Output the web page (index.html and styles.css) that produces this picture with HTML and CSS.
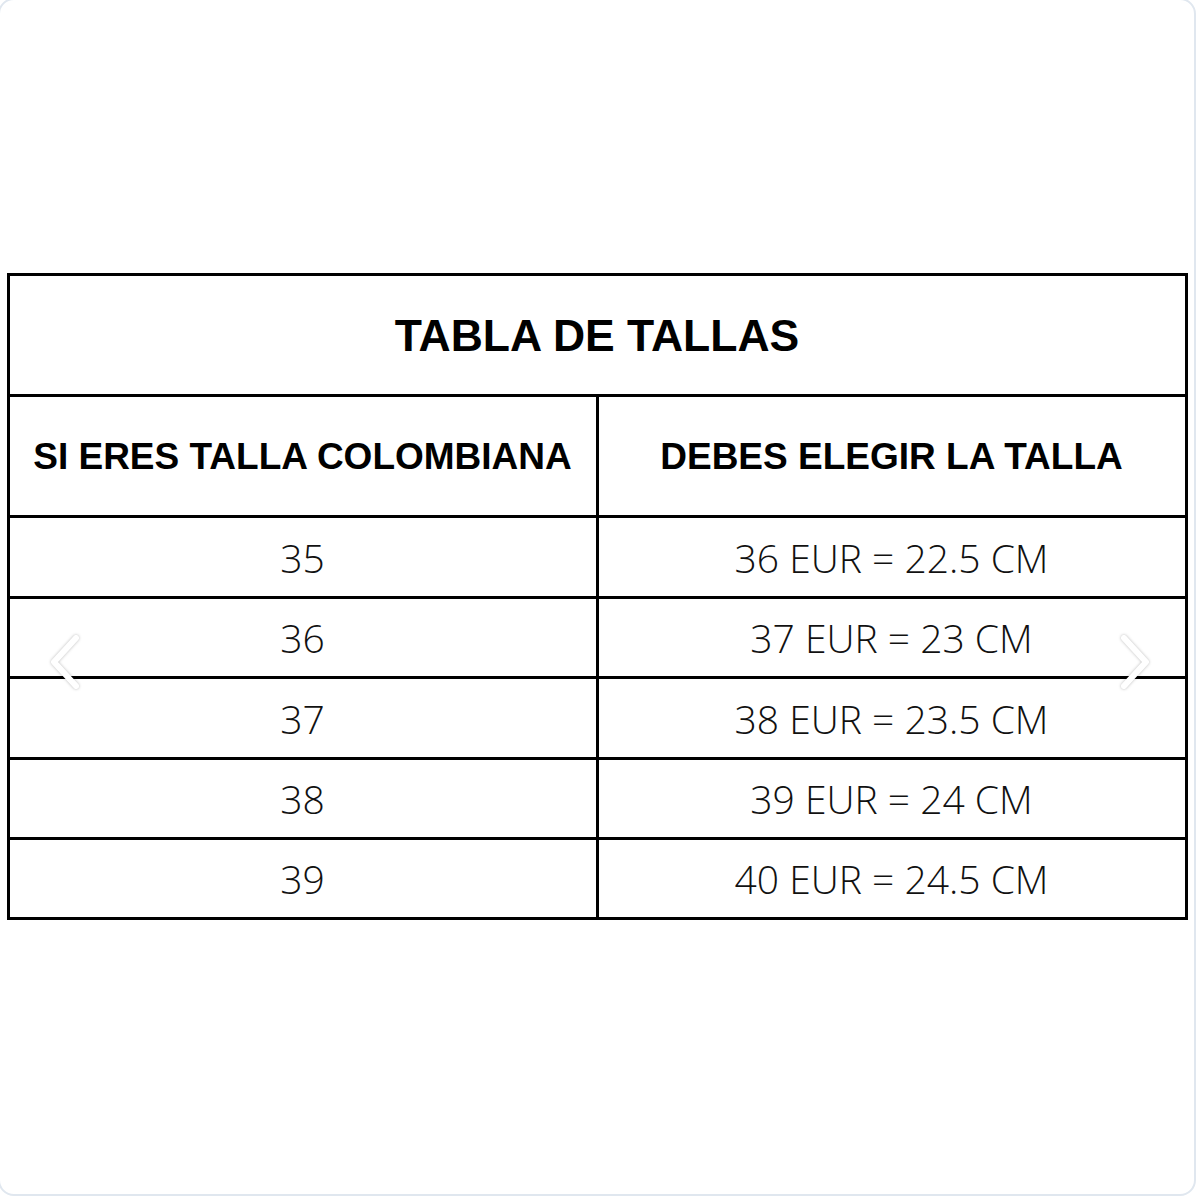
FILE: index.html
```html
<!DOCTYPE html>
<html lang="es">
<head>
<meta charset="utf-8">
<title>Tabla de tallas</title>
<link rel="stylesheet" href="styles.css">
</head>
<body>
<div class="card">
  <div class="chart">
    <div class="cell title">TABLA DE TALLAS</div>
    <div class="cell head">SI ERES TALLA COLOMBIANA</div>
    <div class="cell head">DEBES ELEGIR LA TALLA</div>
    <div class="cell data r1">35</div>
    <div class="cell data r1">36 EUR = 22.5 CM</div>
    <div class="cell data r2">36</div>
    <div class="cell data r2">37 EUR = 23 CM</div>
    <div class="cell data r3">37</div>
    <div class="cell data r3">38 EUR = 23.5 CM</div>
    <div class="cell data r4">38</div>
    <div class="cell data r4">39 EUR = 24 CM</div>
    <div class="cell data r5">39</div>
    <div class="cell data r5">40 EUR = 24.5 CM</div>
  </div>
  <button class="nav prev" aria-label="Anterior">
    <svg viewBox="0 0 40 64" width="40" height="64"><polyline points="30,8 8,32 30,56" /></svg>
  </button>
  <button class="nav next" aria-label="Siguiente">
    <svg viewBox="0 0 40 64" width="40" height="64"><polyline points="10,8 32,32 10,56" /></svg>
  </button>
</div>
</body>
</html>
```
FILE: styles.css
```css
html, body {
  margin: 0;
  padding: 0;
  background: #ffffff;
  overflow: hidden;
}
.card {
  position: relative;
  box-sizing: border-box;
  width: 1198px;
  height: 1198px;
  margin: -2px 0 0 -2px;
  border: 2px solid #e0e7ef;
  border-radius: 16px;
  background: #ffffff;
  display: flex;
  align-items: center;
  justify-content: center;
}
.chart {
  display: grid;
  grid-template-columns: 589px 589px;
  grid-template-rows: 121px 121px 81px 80px 81px 80px 80px;
  border-top: 3px solid #000;
  border-left: 3px solid #000;
  margin-top: -2px;
}
.cell {
  box-sizing: border-box;
  border-right: 3px solid #000;
  border-bottom: 3px solid #000;
  display: flex;
  align-items: center;
  justify-content: center;
  color: #000;
  white-space: nowrap;
}
.title {
  grid-column: 1 / 3;
  font-family: "Liberation Sans", Arial, sans-serif;
  font-weight: 700;
  font-size: 44.5px;
  padding-top: 2px;
}
.head {
  font-family: "Liberation Sans", Arial, sans-serif;
  font-weight: 700;
  font-size: 37px;
  padding-top: 2px;
}
.data {
  font-family: "Open Sans", "DejaVu Sans", sans-serif;
  font-weight: 350;
  font-size: 39px;
  color: #111;
  padding-top: 1px;
}
.nav {
  position: absolute;
  top: 630px;
  width: 40px;
  height: 64px;
  padding: 0;
  border: 0;
  background: transparent;
}
.nav svg {
  display: block;
  overflow: visible;
}
.nav polyline {
  fill: none;
  stroke: #ffffff;
  stroke-width: 6;
  stroke-linecap: round;
  stroke-linejoin: round;
  filter: drop-shadow(0 0 1.5px rgba(0, 0, 0, 0.28));
}
.prev {
  left: 46px;
}
.next {
  left: 1114px;
}
```
